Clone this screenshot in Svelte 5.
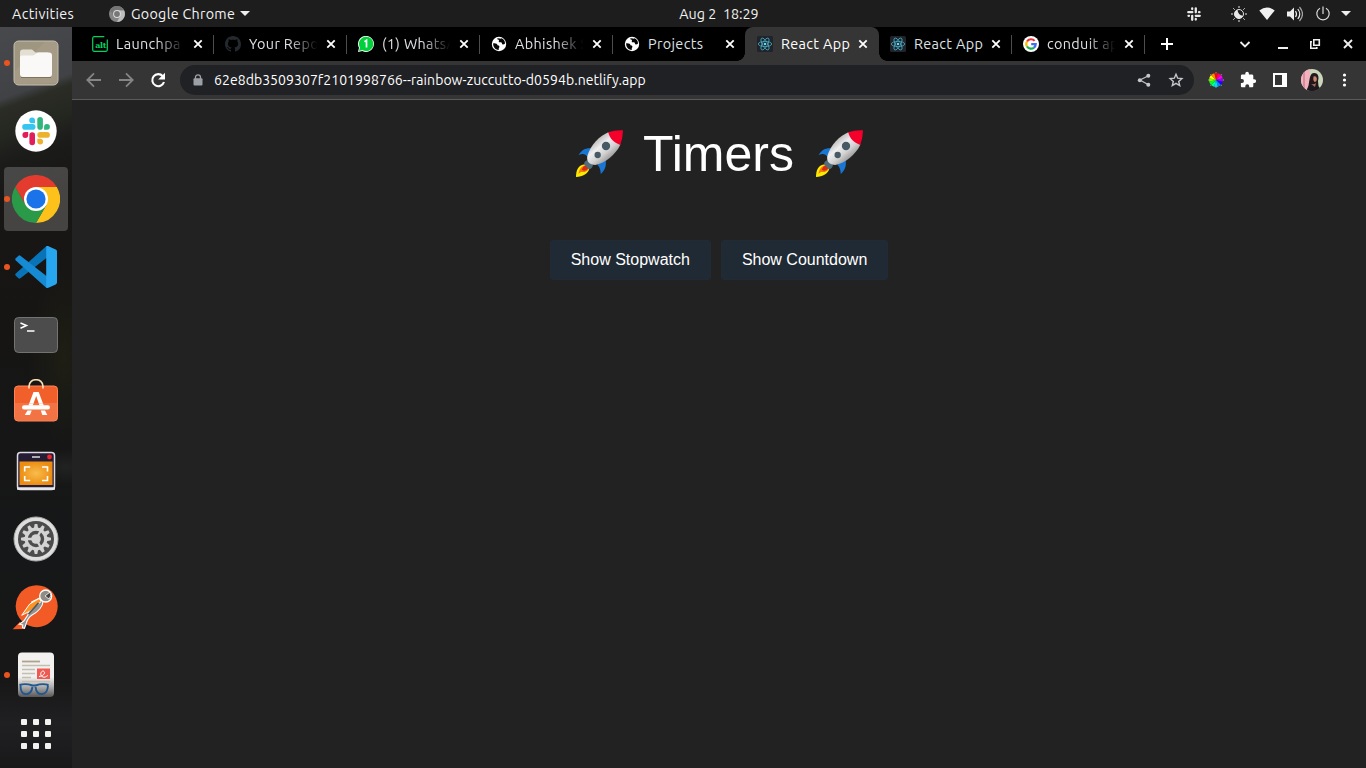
<script>
  const tabs = [
    { icon: 'alt', title: 'Launchpa', fade: true, sep: true },
    { icon: 'github', title: 'Your Repo', fade: true, sep: true },
    { icon: 'whatsapp', title: '(1) WhatsA', fade: true, sep: true },
    { icon: 'globe', title: 'Abhishek S', fade: true, sep: true },
    { icon: 'globe', title: 'Projects' },
    { icon: 'react', title: 'React App', active: true },
    { icon: 'react', title: 'React App', sep: true },
    { icon: 'google', title: 'conduit ap', fade: true, sep: true }
  ];
  const dock = [
    { icon: 'files', open: true },
    { icon: 'slack' },
    { icon: 'chrome', open: true, active: true },
    { icon: 'code', open: true },
    { icon: 'terminal' },
    { icon: 'software' },
    { icon: 'screenshot' },
    { icon: 'settings' },
    { icon: 'postman' },
    { icon: 'reader', open: true }
  ];
  const dots = [0, 1, 2, 3, 4, 5, 6, 7, 8];
  const teeth = Array.from({ length: 12 }, (_, i) => i * 30);
  const wheel = ['#f00', '#f06', '#f0e', '#90f', '#20f', '#08f', '#0df', '#00ff9d', '#0f3', '#7dff00', '#ff0', '#ff8a00'];
  const rim = (a) => `${8 + 7 * Math.sin((a * Math.PI) / 6)} ${8 - 7 * Math.cos((a * Math.PI) / 6)}`;
</script>

{#snippet favicon(name)}
  <svg class="fav" viewBox="0 0 16 16">
    {#if name === 'alt'}
      <path d="M12.3.7H2.2A1.5 1.5 0 0 0 .7 2.2v11.6a1.5 1.5 0 0 0 1.5 1.500h11.600a1.500 1.500 0 0 0 1.500-1.500V3.500" fill="none" stroke="#02d35f" stroke-width="1.200" />
      <text x="3.300" y="11.600" class="alt">alt</text>
    {:else if name === 'github'}
      <path fill="#24292f" d="M8 0C3.580 0 0 3.580 0 8c0 3.540 2.290 6.530 5.470 7.590.4.07.55-.17.55-.38 0-.19-.01-.82-.01-1.490-2.010.37-2.530-.49-2.690-.94-.09-.23-.48-.94-.82-1.130-.28-.15-.68-.52-.01-.53.63-.01 1.080.58 1.230.82.72 1.210 1.870.87 2.330.66.07-.52.28-.87.51-1.070-1.780-.2-3.640-.89-3.640-3.950 0-.87.31-1.590.82-2.150-.08-.2-.36-1.020.08-2.120 0 0 .67-.21 2.200.82.64-.18 1.320-.27 2-.27s1.360.09 2 .27c1.530-1.040 2.200-.82 2.200-.82.44 1.100.16 1.920.08 2.120.51.56.82 1.270.82 2.150 0 3.070-1.870 3.750-3.650 3.950.29.25.54.73.54 1.480 0 1.070-.01 1.930-.01 2.200 0 .21.15.46.55.38A8 8 0 0 0 16 8c0-4.420-3.580-8-8-8z" />
    {:else if name === 'whatsapp'}
      <path fill="#fff" d="M0 16 1 11.800A8 8 0 1 1 4.300 15z" />
      <path fill="#00d03c" d="M1 15 1.900 11.500A7.200 7.200 0 1 1 4.500 14.100z" />
      <path d="M6.500 5.700 8.500 4.400v7" fill="none" stroke="#fff" stroke-width="1.700" />
    {:else if name === 'globe'}
      <circle cx="8" cy="8" r="7.200" fill="#fff" />
      <path d="M2.200 7.300C5 7 6.500 8 6.500 9.200c1.800 0 2.200 1 1.700 2.200-.6 1-.5 1.700-.4 2.500C4.200 14 1.800 10.800 2.200 7.300zM6 2.500c.6 1.500 1.500 1 1.900 1.700.5 1-.8 1.400.1 2 .8.5 1.600-.3 2.400.3.900.7.3 1.900 1.500 2 .9.100 1.700-.4 2.100-.9.1-2.500-1.300-4.500-3.700-5.300-.6.900-1.900.2-2.300-.1z" fill="#050505" />
    {:else if name === 'react'}
      <rect width="16" height="16" rx="1.500" fill="#20232a" />
      <g fill="none" stroke="#46a7be" stroke-width=".85">
        <ellipse cx="8" cy="8" rx="6.700" ry="2.600" />
        <ellipse cx="8" cy="8" rx="6.700" ry="2.600" transform="rotate(60 8 8)" />
        <ellipse cx="8" cy="8" rx="6.700" ry="2.600" transform="rotate(120 8 8)" />
      </g>
      <circle cx="8" cy="8" r="1.300" fill="#61dafb" />
    {:else if name === 'google'}
      <circle cx="8" cy="8" r="8" fill="#fff" />
      <g fill="none" stroke-width="2.200">
        <path d="M11.600 4.900A4.700 4.700 0 0 0 4 5.500" stroke="#ea2f35" />
        <path d="M4 5.500a4.700 4.700 0 0 0 0 5" stroke="#fbbc05" />
        <path d="M4 10.500a4.700 4.700 0 0 0 7 1.100" stroke="#16b34a" />
        <path d="M11 11.600A4.700 4.700 0 0 0 12.700 8.100H8.200" stroke="#426ff0" />
      </g>
    {/if}
  </svg>
{/snippet}

{#snippet appIcon(name)}
  <svg class="app" viewBox="0 0 48 48">
    {#if name === 'files'}
      <rect x="2" y="2" width="44" height="44" rx="4.500" fill="#9f967f" stroke="#c8c1b1" stroke-width="1" />
      <path d="M3 32 33 3h9a3 3 0 0 1 3 3v38L3 45z" fill="#aaa18c" opacity=".55" />
      <path d="M8 13.500A3 3 0 0 1 11 10.500h9l3.500 3H36v8H8z" fill="#e3dfd3" />
      <path d="M8 18.500q0-2 2-2h10q2 0 3.500-1.500 1.500-1.500 3-1.500h10.500a3 3 0 0 1 3 3V35a3 3 0 0 1-3 3H11a3 3 0 0 1-3-3z" fill="#faf9f7" />
      <path d="M9 38.500h30" stroke="#7b735e" />
    {:else if name === 'slack'}
      <circle cx="24" cy="24" r="20.700" fill="#fff" />
      <g stroke-width="5.600" stroke-linecap="round">
        <path d="M13 19.900h7.700" stroke="#36c5f0" /><path d="M28.100 12.800v7.100" stroke="#2eb67d" />
        <path d="M35.100 27.900h-7" stroke="#ecb22e" /><path d="M20.200 28v7.500" stroke="#e01e5a" />
      </g>
      <path d="M23 16.300h-2.800a2.900 2.900 0 1 1 2.800-2.900z" fill="#36c5f0" />
      <path d="M32.100 22.700v-2.800a2.900 2.900 0 1 1 2.900 2.800z" fill="#2eb67d" />
      <path d="M25.300 31.700h2.800a2.900 2.900 0 1 1-2.800 2.900z" fill="#ecb22e" />
      <path d="M16.200 25.100v2.800a2.900 2.900 0 1 1-2.900-2.800z" fill="#e01e5a" />
    {:else if name === 'chrome'}
      <path d="M24 12H44.800A24 24 0 0 1 24 48l10.400-18z" fill="#fcc21b" />
      <path d="M3.200 12A24 24 0 0 1 44.800 12H24L13.600 30z" fill="#e33b2e" />
      <path d="M3.200 12 13.600 30 24 36l10.400-6L24 48A24 24 0 0 1 3.200 12z" fill="#2b9a48" />
      <circle cx="24" cy="24" r="12" fill="#fff" /><circle cx="24" cy="24" r="9.600" fill="#1a73e8" />
    {:else if name === 'code'}
      <path d="M34.500 3 3.800 30.500a1.500 1.500 0 0 0 0 2.200l2.700 2.500a1.500 1.500 0 0 0 1.900.1L37 13z" fill="#0873b7" />
      <path d="M34.500 45 3.800 17.500a1.500 1.500 0 0 1 0-2.200l2.700-2.500a1.500 1.500 0 0 1 1.900-.1L37 35z" fill="#168ad2" />
      <path d="M34.200 44.800c1 .4 2 .2 2.800-.2l6.700-3.200c.8-.4 1.300-1.200 1.300-2.100V8.700c0-.9-.5-1.700-1.300-2.100L37 3.400c-.8-.4-1.800-.6-2.800-.2z" fill="#27a5ef" />
    {:else if name === 'terminal'}
      <rect x="2.500" y="6.500" width="43" height="35" rx="4" fill="#4c4c4c" stroke="#737373" />
      <path d="m8.500 12 6 2.500-6 2.800M15 20h7.500" fill="none" stroke="#fff" stroke-width="1.500" />
    {:else if name === 'software'}
      <rect x="2.500" y="7" width="43" height="35" rx="3.500" fill="#f1602a" stroke="#ff8558" />
      <path d="M3 24h42v14a3.500 3.500 0 0 1-3.500 3.500h-35A3.500 3.500 0 0 1 3 38z" fill="#fff" opacity=".13" />
      <path d="M17 9.500V7.500c0-9 14-9 14 0v2" fill="none" stroke="#f8dfb4" stroke-width="1.700" />
      <path d="M21.500 13h5.200L31 24.500h-4.200L24.200 17 21.500 24.500h-4.300zM15.500 31.500h4.200L18 36h-5.200zM28.800 31.500H33l2.300 4.500h-5z" fill="#fff" />
      <rect x="10" y="26.300" width="28" height="4.200" rx="2.100" fill="#fff" />
      <path d="m17.200 24.500-.8 2h4.300l.8-2zM26.800 24.500l.8 2h4.200l-.8-2z" fill="#fff" />
    {:else if name === 'screenshot'}
      <rect x="5.500" y="5.500" width="37" height="37" rx="3" fill="#241d35" stroke="#dedbe2" stroke-width="1.500" />
      <path d="M5 41.500h38" stroke="#e8e6eb" stroke-width="2.500" />
      <defs><radialGradient id="amber"><stop stop-color="#f9bd4d" /><stop offset="1" stop-color="#ec8d12" /></radialGradient></defs>
      <path d="M7.500 14.500h33V38h-33z" fill="url(#amber)" />
      <path d="M20 10h8" stroke="#ddd" stroke-width="1.500" /><circle cx="37.500" cy="10" r="2.400" fill="#f4242d" />
      <path d="M12.700 24.500V20h5.500M30 20h5.500v4.500M12.700 29v4.500h5.500M30 33.500h5.500V29" fill="none" stroke="#fff" stroke-width="1.600" />
    {:else if name === 'settings'}
      <circle cx="24" cy="24" r="22" fill="#dedede" stroke="#aaa" /><circle cx="24" cy="24" r="18" fill="#4c4c4c" />
      {#each teeth as angle}
        <path d="M22.700 9h2.600l.9 4.500h-4.400z" fill="#d3d3d3" transform="rotate({angle} 24 24)" />
      {/each}
      <circle cx="24" cy="24" r="9.800" fill="none" stroke="#d3d3d3" stroke-width="3.200" />
      <circle cx="24" cy="24" r="4.800" fill="#d3d3d3" />
      <path d="M24 24H14.500M24 24l4.900-8.500M24 24l4.900 8.500" stroke="#d3d3d3" stroke-width="2.300" />
    {:else if name === 'postman'}
      <circle cx="24.700" cy="23.200" r="21" fill="#f25b25" />
      <path d="M.7 46.300 8 38.700l5 7.300z" fill="#f25b25" />
      <path d="M31 18.500c0 5-5 10.500-11 13.500-3 2-5 5-5.800 8.500l-1.700 4.800-2-.6.300-2.700-3.500-.8 4.500-3.200 4-6 4-13 8-4z" fill="#929292" stroke="#fff" stroke-width="1.100" />
      <path d="m9.700 32.300 8-11.300 9.500-5.500 2 3-11 9.500z" fill="#ff9321" stroke="#fff" stroke-width="1" />
      <path d="m16.500 31 10-11" stroke="#555" stroke-width="1.800" />
      <circle cx="33.700" cy="13" r="6" fill="#908c86" stroke="#fff" stroke-width="1.300" />
      <path d="m33 13 5-4q2 4-1 7z" fill="#48433f" stroke="#fff" stroke-width=".8" />
    {:else if name === 'reader'}
      <defs><linearGradient id="paper" x2="0" y2="1"><stop offset=".55" stop-color="#f2f1ef" /><stop offset=".75" stop-color="#b5b5b5" /><stop offset="1" stop-color="#585858" /></linearGradient></defs>
      <rect x="6" y="1.500" width="36" height="44.500" rx="4" fill="url(#paper)" />
      <path d="M10 10.500h18" stroke="#ada48f" stroke-width="1.800" />
      <path d="M10 14.500h28M10 18.500h13M10 22.500h13M10 26.500h9M10 30.500h28" stroke="#c2beb1" stroke-width="1.700" />
      <rect x="25" y="17.500" width="13" height="10.500" fill="#ee5a52" />
      <path d="M27 25.500c3 0 7-3 5-5s-5 3-2 5 5-1 6-1" fill="none" stroke="#fff" stroke-width="1" />
      <path d="M7.500 34q6-2 13 .5h3q7-2.500 13-.5M8.500 34.500q0 8 4.500 8.500 6 1 7.500-7M23.500 36q1 8 7 7 5-.5 5.500-8.500" fill="none" stroke="#24578e" stroke-width="1.900" />
    {/if}
  </svg>
{/snippet}

{#snippet close()}
  <svg class="x" viewBox="0 0 10 10"><path d="m1.300 1.300 7.400 7.400M8.700 1.300 1.300 8.700" /></svg>
{/snippet}

{#snippet slackMark()}
  <svg width="14" height="14" viewBox="0 0 14 14" fill="none" stroke="#e8e8e8" stroke-width="2.300" stroke-linecap="round">
    <path d="M1.300 5.200h4M5.200 1.500v.5M8.800 1.300v4M12 5.200h.5M8.800 8.800h4M8.800 12v.5M5.200 8.800v4M1.500 8.800H2" />
  </svg>
{/snippet}

{#snippet rocket()}
  <svg class="rocket" viewBox="0 0 141 141">
    <path d="M8 75C18 58 30 53 47 55L34 80C28 70 18 70 8 75z" fill="#1976d2" />
    <path d="M64 104 89 88C92 110 86 122 74 132 74 120 72 112 64 104z" fill="#1976d2" />
    <path d="M0 141C0 120 7 105 27 103L40 116C38 129 20 140 0 141z" fill="#ffeb00" />
    <path d="M7 131Q11 110 28 105l10 11Q32 128 15 126z" fill="#f67809" />
    <path d="M17 119q4-10 13-13l7 8q-4 8-13 8z" fill="#d92b16" />
    <path d="M24 103q1-12 13-13l14 15q-2 12-13 13z" fill="#526b78" />
    <path d="M97 7C70 19 43 45 34 78 31 94 40 105 58 105 87 99 119 74 133 44z" fill="url(#hull)" />
    <path d="M97 7Q116 0 141 1 141 22 133 45C115 39 101 27 97 7z" fill="#f4002b" />
    <circle cx="90" cy="48" r="12.500" fill="#455a64" /><circle cx="65" cy="75" r="9.500" fill="#455a64" />
    <defs><linearGradient id="hull" x1=".25" y1=".2" x2=".75" y2=".8"><stop stop-color="#b4b4b4" /><stop offset=".35" stop-color="#eee" /><stop offset=".65" stop-color="#d3d3d3" /><stop offset="1" stop-color="#929292" /></linearGradient></defs>
  </svg>
{/snippet}

<div class="desktop">
  <header class="panel">
    <div class="left">
      <span class="activities">Activities</span>
      <svg width="16" height="16" viewBox="0 0 16 16"><circle cx="8" cy="8" r="8" fill="#858585" /><path d="M8 4.300h7A8 8 0 0 1 8 16l3.200-6z" fill="#bdbdbd" /><path d="M1 4a8 8 0 0 1 14 .3H8L4.800 9.800z" fill="#757575" /><circle cx="8" cy="8" r="3.900" fill="#ddd" /><circle cx="8" cy="8" r="2.900" fill="#777" /></svg>
      <span class="appname">Google Chrome</span>
      <i class="caret"></i>
    </div>
    <span class="clock">Aug 2&nbsp; 18:29</span>
    <div class="tray">
      <span class="slack-tray">{@render slackMark()}</span>
      <svg width="16" height="16" viewBox="0 0 16 16" fill="none" stroke="#e8e8e8"><circle cx="8" cy="8" r="4.500" /><path d="M6.500 3.800q.5 5.500 5.500 6A4.500 4.500 0 1 1 6.500 3.800z" fill="#e8e8e8" stroke="none" /><path d="M8 0v2M8 14v2M0 8h2M14 8h2M2.300 2.300l1.400 1.400M12.300 12.300l1.400 1.400M2.300 13.700l1.400-1.400M12.300 3.700l1.400-1.400" /></svg>
      <svg width="16" height="16" viewBox="0 0 16 16"><path d="M.3 4.500Q8-1.300 15.700 4.500L8 14z" fill="#f0f0f0" /></svg>
      <svg width="16" height="16" viewBox="0 0 16 16" fill="none" stroke="#eee" stroke-width="1.200"><path d="M0 5.500h3L7 1.500v13l-4-4H0z" fill="#eee" stroke="none" /><path d="M8.500 5q2 3 0 6M10.800 3q4 5 0 10" /><path d="M12.500 1q6 7 0 14" opacity=".65" /></svg>
      <svg width="16" height="16" viewBox="0 0 16 16" fill="none" stroke="#ddd" stroke-width="1.200"><path d="M5 2.200a6.200 6.200 0 1 0 6 0M8 .5v7.500" /></svg>
      <i class="caret"></i>
    </div>
  </header>

  <div class="main">
    <nav class="dock">
      {#each dock as item}
        <div class="slot" class:open={item.open} class:active={item.active}>{@render appIcon(item.icon)}</div>
      {/each}
      <div class="grid">
        {#each dots as dot}<i></i>{/each}
      </div>
    </nav>

    <section class="browser">
      <div class="tabs">
        {#each tabs as tab}
          <div class="tab" class:active={tab.active} class:sep={tab.sep}>
            {@render favicon(tab.icon)}
            <span class="title" class:fade={tab.fade}>{tab.title}</span>
            {@render close()}
          </div>
        {/each}
        <svg class="plus" viewBox="0 0 12 12"><path d="M6 0v12M0 6h12" stroke="#fff" stroke-width="2" /></svg>
        <div class="controls">
          <svg width="38" height="16" viewBox="0 0 38 16"><path d="m12.500 6 4.500 4.500L21.500 6" /></svg>
          <svg width="32" height="16" viewBox="0 0 32 16"><path d="M12 12h10" stroke-width="2" /></svg>
          <svg width="32" height="16" viewBox="0 0 32 16"><path d="M14 5.800h-1.200v6.400h6V11M15.800 3.800h5.500v5.500h-5.500z" stroke-width="1.600" /></svg>
          <svg width="36" height="16" viewBox="0 0 36 16"><path d="m14 4 8 8M22 4l-8 8" stroke-width="1.900" /></svg>
        </div>
      </div>

      <div class="toolbar">
        <svg class="tool" viewBox="0 0 32 32"><path d="M23 16H9.500M16 9.300 9.300 16l6.700 6.700" stroke="#858585" /></svg>
        <svg class="tool" viewBox="0 0 32 32"><path d="M9 16h13.500M16 9.300l6.700 6.700-6.700 6.700" stroke="#858585" /></svg>
        <svg class="tool" viewBox="0 0 32 32"><path d="M20.800 12.200A6 6 0 1 0 22 18" stroke="#fff" stroke-width="2.100" /><path d="M23 8.700v6.800h-6.800z" fill="#fff" /></svg>
        <div class="omnibox">
          <svg class="lock" viewBox="0 0 10 12"><path d="M2.500 5V3.300a2.500 2.500 0 0 1 5 0V5" fill="none" stroke="#9aa0a6" stroke-width="1.300" /><rect x=".5" y="4.300" width="9" height="7.200" rx="1" fill="#9aa0a6" /></svg>
          <span class="url">62e8db3509307f2101998766--rainbow-zuccutto-d0594b.netlify.app</span>
          <svg class="tool" viewBox="0 0 32 32"><path d="m20 12-8 4 8 4.500" stroke="#bcc0c4" stroke-width="1.300" /><g fill="#c5c8cb"><circle cx="20.300" cy="11.800" r="2" /><circle cx="11.800" cy="16.200" r="2" /><circle cx="20.300" cy="20.700" r="2" /></g></svg>
          <svg class="tool" viewBox="0 0 32 32"><path d="m16 10.300 1.700 3.900 4.200.4-3.200 2.800 1 4.100-3.700-2.200-3.700 2.200 1-4.100-3.200-2.800 4.200-.4z" stroke="#c5c8cb" stroke-width="1.400" /></svg>
        </div>
        <svg class="wheel" viewBox="0 0 16 16">
          {#each wheel as colour, i}
            <path d="M8 8 {rim(i - 0.5)} A7 7 0 0 1 {rim(i + 0.5)}z" fill={colour} />
          {/each}
          <path d="M7.300 0h1.400v1.200H7.300zM7.300 14.800h1.400V16H7.300zM0 7.300h1.200v1.400H0zM14.800 7.300H16v1.400h-1.200zM2 2h1.200v1.200H2zM12.800 2H14v1.200h-1.200zM2 12.800h1.200V14H2zM12.800 12.800H14V14h-1.200z" fill="#777" />
        </svg>
        <svg class="tool" viewBox="0 0 32 32"><path transform="translate(.6 .2)" d="M21.700 15h-1v-3.200c0-.8-.6-1.400-1.400-1.400h-3v-1a1.800 1.800 0 0 0-3.600 0v1h-3c-.8 0-1.400.6-1.400 1.400v3h1.100a1.950 1.950 0 0 1 0 3.900H8.300v3c0 .8.600 1.400 1.400 1.400h3v-1.100a1.950 1.950 0 0 1 3.900 0v1.100h2.700c.8 0 1.400-.6 1.400-1.400v-3h1a1.850 1.850 0 0 0 0-3.700z" fill="#fff" /></svg>
        <svg class="tool" viewBox="0 0 32 32"><path d="M9 9h14v14H9zM11 11v10h7V11z" fill="#fff" fill-rule="evenodd" /></svg>
        <svg class="tool" viewBox="0 0 32 32">
          <defs><clipPath id="face"><circle cx="16" cy="16" r="11" /></clipPath></defs>
          <g clip-path="url(#face)">
            <path d="M5 5h22v22H5z" fill="#c9d6ba" /><path d="M5 5h9v22H5z" fill="#f0b3bd" /><path d="M7 5h2v22H7z" fill="#d98b9b" />
            <path d="M11 26c3-3 1-17 7-17 5 0 5 5 4 8l1 10H11z" fill="#24181a" />
            <path d="M17.500 12.500q3-1 3.300 2t-2 3.500q-2-1-1.300-5.500z" fill="#c58773" />
            <path d="M11 27q0-5 4-6l7 1q3 2 3 5z" fill="#1c191f" /><path d="M15 20q3 1 5-1l-1 4z" fill="#a56d60" />
          </g>
        </svg>
        <svg class="tool" viewBox="0 0 32 32"><g fill="#fff" transform="translate(.5)"><circle cx="16" cy="11" r="1.600" /><circle cx="16" cy="16" r="1.600" /><circle cx="16" cy="21" r="1.600" /></g></svg>
      </div>

      <main class="page">
        <h1>{@render rocket()}<span>Timers</span>{@render rocket()}</h1>
        <div class="buttons">
          <button>Show Stopwatch</button>
          <button>Show Countdown</button>
        </div>
      </main>
    </section>
  </div>
</div>

<style>
  :global(body) { margin: 0; background: #222; overflow: hidden; }
  svg { display: block; flex: none; }
  .desktop { width: 1366px; height: 768px; display: flex; flex-direction: column; overflow: hidden; font-family: "Ubuntu", "Noto Sans", sans-serif; font-size: 14px; color: #fff; }

  .panel { height: 27px; flex: none; background: #1d1d1d; display: grid; grid-template-columns: 1fr auto 1fr; align-items: center; color: #f2f2f2; line-height: 26px; }
  .left { display: flex; align-items: center; padding-left: 12px; }
  .activities { width: 97px; font-size: 14.3px; letter-spacing: 0.35px; }
  .appname { width: 104px; margin: 0 6px; white-space: nowrap; font-size: 14.3px; letter-spacing: 0.3px; }
  .left .caret { margin-left: -1px; }
  .clock { white-space: pre; font-size: 14.3px; position: relative; left: 36px; }
  .tray { display: flex; align-items: center; justify-content: flex-end; gap: 12px; padding-right: 15px; }
  .slack-tray { margin-right: 18px; }
  .caret { width: 0; height: 0; border: 5px solid transparent; border-top-color: #eee; border-bottom: 0; }
  .tray .caret { margin-left: -2px; }

  .main { flex: 1; display: flex; min-height: 0; }
  .dock { width: 72px; flex: none; box-sizing: border-box; padding-top: 2px; background:
      radial-gradient(ellipse 28px 18px at 66px 440px, #2b2c2c88, transparent),
      radial-gradient(ellipse 34px 90px at 64px 330px, #25261488, transparent),
      linear-gradient(160deg, #47494c 0, #404246 68px, #2a2c25 78px, #242620 105px, #1b1b1a 130px, transparent 170px),
      linear-gradient(#191817, #161514 40%, #161718 70%, #171717 88%, #202023 94%, #19191a); }
  .slot { height: 68px; padding: 0 4px; box-sizing: border-box; display: flex; align-items: center; justify-content: center; position: relative; }
  .slot.active { height: 64px; margin: 2px 4px; padding: 0; border-radius: 4px; background: #ffffff33; }
  .slot.open::before { content: ""; position: absolute; left: 4px; top: 50%; width: 6px; height: 6px; margin-top: -3px; border-radius: 50%; background: #e95420; }
  .slot.active.open::before { left: 0; }
  .app { width: 48px; height: 48px; }
  .grid { display: grid; grid-template-columns: repeat(3, 6px); gap: 6px; justify-content: center; padding-top: 10px; }
  .grid i { width: 6px; height: 6px; border-radius: 1px; background: #f2f2f0; }

  .browser { flex: 1; min-width: 0; display: flex; flex-direction: column; background: #353535; }
  .tabs { height: 34px; flex: none; display: flex; align-items: center; background: #000; padding-left: 9px; }
  .tab { width: 133px; height: 34px; flex: none; box-sizing: border-box; padding: 0 10px 0 11px; display: flex; align-items: center; position: relative; color: #dfe1e5; }
  .tab.sep::after { content: ""; position: absolute; right: 0; top: 8px; width: 1px; height: 19px; background: #4d4d4d; }
  .tab.active { width: 134px; margin-left: -1px; padding-left: 12px; background: #353535; border-radius: 8px 8px 0 0; color: #fff; }
  .tab.active::before, .tab.active::after { content: ""; position: absolute; bottom: 0; width: 8px; height: 8px; }
  .tab.active::before { right: 100%; background: radial-gradient(circle at 0 0, transparent 7.5px, #353535 8px); }
  .tab.active::after { left: 100%; background: radial-gradient(circle at 100% 0, transparent 7.5px, #353535 8px); }
  .fav { width: 16px; height: 16px; margin-right: 8px; }
  .alt { font: bold 8px "DejaVu Serif", serif; fill: #02d35f; letter-spacing: -0.4px; }
  .title { width: 72px; margin-right: 5px; white-space: nowrap; font-size: 14.4px; letter-spacing: 0.35px; line-height: 20px; }
  .title.fade { mask-image: linear-gradient(90deg, #000 56%, transparent 95%); }
  .x { width: 10px; height: 10px; fill: none; stroke: #fff; stroke-width: 1.8; }
  .plus { width: 12px; height: 12px; margin-left: 16px; }
  .controls { margin-left: auto; display: flex; fill: none; stroke: #eee; stroke-width: 1.8; }

  .toolbar { height: 39px; flex: none; box-sizing: border-box; border-bottom: 1px solid #5c5a5a; display: flex; align-items: center; padding: 0 6px; }
  .tool { width: 32px; height: 32px; fill: none; stroke-width: 1.8; }
  .wheel { width: 16px; height: 16px; margin: 0 8px; }
  .omnibox { flex: 1; height: 30px; margin: 0 6px; border-radius: 15px; background: #202124; display: flex; align-items: center; padding-left: 13px; padding-right: 2px; }
  .lock { width: 10px; height: 12px; margin-right: 11px; }
  .url { flex: 1; font-size: 14px; letter-spacing: 0.06px; white-space: nowrap; }

  .page { flex: 1; background: #222; font-family: "Liberation Sans", Arial, sans-serif; }
  h1 { margin: 26px 0 0; padding-left: 1px; height: 58px; display: flex; align-items: flex-start; justify-content: center; font-size: 50px; line-height: 57px; font-weight: 400; }
  h1 span { margin: 0 22px 0 20px; }
  .rocket { width: 47px; height: 47px; margin-top: 4px; }
  .buttons { display: flex; justify-content: center; gap: 10px; margin-top: 56px; }
  button { height: 40px; padding: 0 20px; border: 1px solid #202b36; border-radius: 3px; background: #202a34; color: #fff; font: 16px "Liberation Sans", Arial, sans-serif; }
</style>
